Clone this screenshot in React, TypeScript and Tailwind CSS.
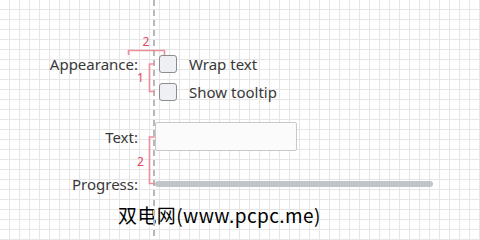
export default function App() {
  const label = "w-[138px] shrink-0 text-right text-[15px] leading-[18px] text-[#383838]";
  return (
    <div className="relative w-[480px] h-[240px] overflow-hidden bg-white bg-[linear-gradient(to_right,transparent_9px,#e6e6e6_9px,#e6e6e6_11px,transparent_11px),linear-gradient(to_bottom,transparent_9px,#e6e6e6_9px,#e6e6e6_11px,transparent_11px)] bg-[size:10px_10px] font-['Noto_Sans',sans-serif]">
      <div className="flex flex-col pt-[55px]">
        {/* Appearance */}
        <div className="flex items-start">
          <div className={label}>Appearance:</div>
          <div className="ml-[17px] flex flex-col gap-[10px]">
            {["Wrap text", "Show tooltip"].map((t) => (
              <div key={t} className="flex items-center h-[18px]">
                <div className="ml-[4px] w-[18px] h-[18px] rounded-[3px] border border-[#8c8c8c] bg-[#eef0f3]" />
                <span className="ml-[12px] text-[15px] leading-[18px] text-[#383838]">{t}</span>
              </div>
            ))}
          </div>
        </div>

        {/* Text */}
        <div className="flex items-center mt-[21px]">
          <div className={label}>Text:</div>
          <div className="ml-[17px] w-[142px] h-[29px] rounded-[2px] border border-[#c8c8c8] bg-[#fbfbfb]" />
        </div>

        {/* Progress */}
        <div className="flex items-center mt-[24px]">
          <div className={label}>Progress:</div>
          <div className="ml-[17px] w-[278px] h-[6px] rounded-full bg-[#c0c5ca]" />
        </div>

        <div className="mt-[12px] pl-[118px] text-[19px] leading-[20px] tracking-[0.4px] text-black font-['Noto_Sans_CJK_SC',sans-serif]">
          双电网(www.pcpc.me)
        </div>
      </div>

      {/* dashed guide */}
      <div className="absolute left-[153px] top-0 h-full w-[2px] bg-[repeating-linear-gradient(to_bottom,#b8b8b8_0,#b8b8b8_6px,transparent_6px,transparent_10px)]" />

      {/* spacing annotations */}
      <svg className="absolute inset-0" width="480" height="240" viewBox="0 0 480 240">
        <g fill="none" stroke="#eb8f9c" strokeWidth="1.6">
          <path d="M128.5 55 V50.5 H164.5 V55" />
          <path d="M155 64 H149.5 V91.5 H155" />
          <path d="M155 137 H149.5 V183.5 H155" />
        </g>
        <g fill="#e2475f" fontSize="12" fontFamily="Noto Sans, sans-serif" textAnchor="middle">
          <text x="146" y="45.5">2</text>
          <text x="140.5" y="82">1</text>
          <text x="140.5" y="165.5">2</text>
        </g>
      </svg>
    </div>
  );
}
